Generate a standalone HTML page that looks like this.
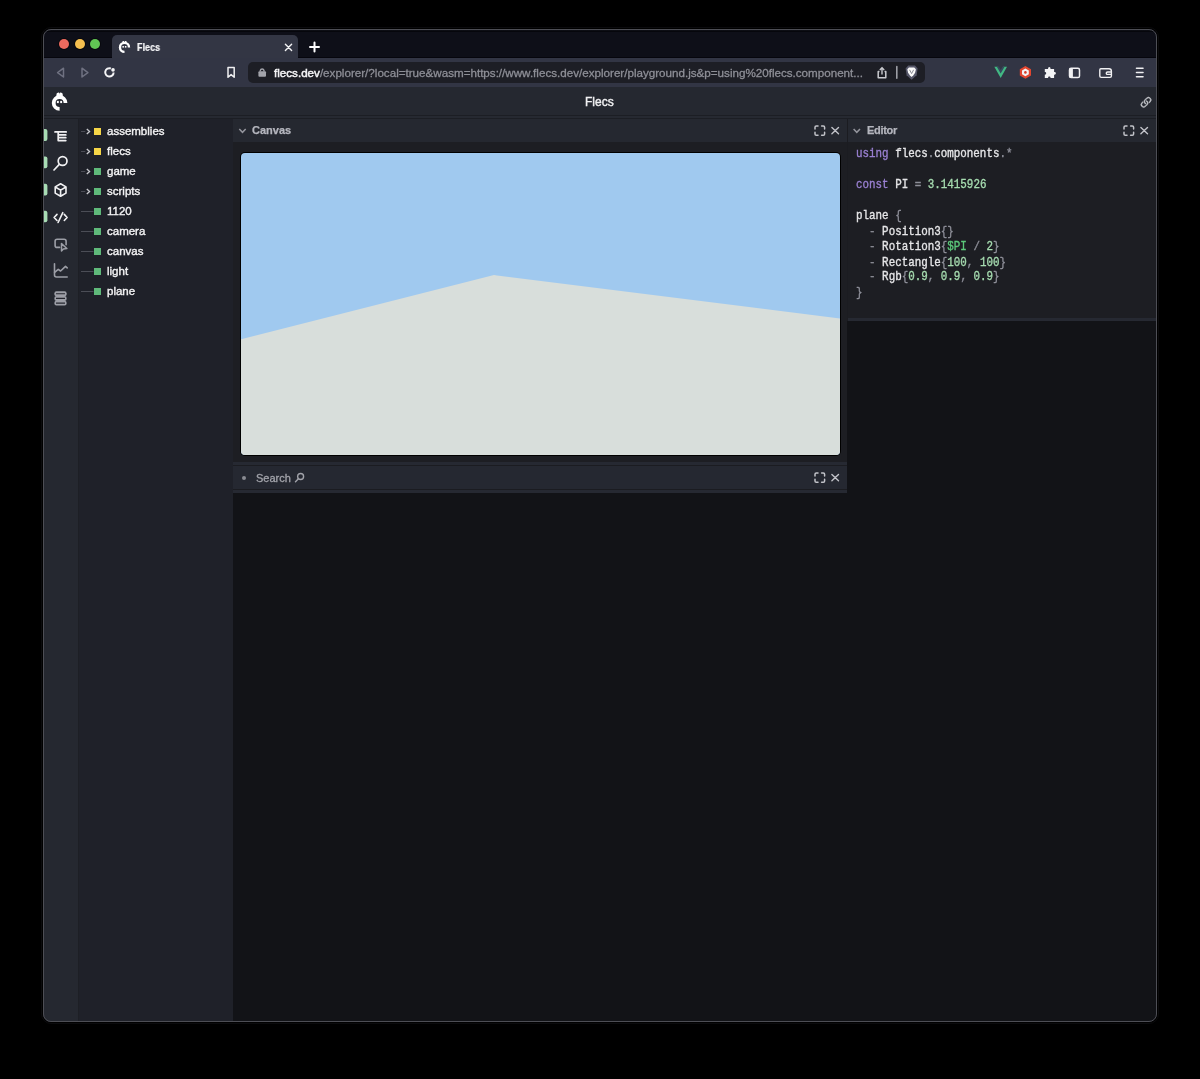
<!DOCTYPE html>
<html><head><meta charset="utf-8">
<style>
*{box-sizing:border-box;margin:0;padding:0}
html,body{width:1200px;height:1079px;background:#000;overflow:hidden}
body{position:relative;font-family:"Liberation Sans",sans-serif}
.a{position:absolute;will-change:transform}
#win{position:absolute;left:0;top:0;width:1200px;height:1079px;clip-path:inset(29px 43px 57px 43px round 8px);background:#121317}
#frame{position:absolute;left:43px;top:29px;width:1114px;height:993px;border:1px solid #4d4e55;border-radius:8px}
#shadow{position:absolute;left:41px;top:27px;width:1118px;height:997px;border:1px solid #0b0b0d;border-radius:10px}
svg{position:absolute;overflow:visible}
.code{font-family:"Liberation Mono",monospace;font-size:10.87px;line-height:13.51px;white-space:pre;color:#e4e4e6;transform:scaleY(1.14);transform-origin:0 0;-webkit-text-stroke:0.3px currentColor}
.k{color:#9a80d2}.w{color:#e6e6e8}.p{color:#8e8f99}.n{color:#a6dcb0}.v{color:#5cc97a}
.tt{color:#f3f3f5;font-size:11.5px;line-height:14px;white-space:nowrap;-webkit-text-stroke:0.4px #f3f3f5;text-shadow:0 0 1px #000}
</style></head><body>
<div id="shadow"></div>
<div id="win">
  <!-- title bar -->
  <div class="a" style="left:43px;top:29px;width:1114px;height:28px;background:#0e0f18"></div>
  <div class="a" style="left:43px;top:57px;width:1114px;height:1px;background:#06060d"></div>
  <div class="a" style="left:43px;top:30px;width:1114px;height:2px;background:linear-gradient(#101117,#030308)"></div>
  <!-- traffic lights -->
  <div class="a" style="left:59.2px;top:39.2px;width:10px;height:10px;border-radius:50%;background:#ed6a5e;box-shadow:0 0 0 1px rgba(0,0,0,0.45)"></div>
  <div class="a" style="left:74.8px;top:39.2px;width:10px;height:10px;border-radius:50%;background:#f5bf4f;box-shadow:0 0 0 1px rgba(0,0,0,0.45)"></div>
  <div class="a" style="left:90px;top:39.2px;width:10px;height:10px;border-radius:50%;background:#61c554;box-shadow:0 0 0 1px rgba(0,0,0,0.45)"></div>
  <!-- tab -->
  <div class="a" style="left:112px;top:35px;width:186px;height:24px;background:#333644;border-radius:5px 5px 0 0"></div>
  <div class="a" style="left:137px;top:41px;font-size:10.5px;font-weight:bold;color:#f6f6f8;-webkit-text-stroke:0.2px #f6f6f8;transform:scaleX(0.86);transform-origin:0 0">Flecs</div>
  <!-- toolbar -->
  <div class="a" style="left:43px;top:58px;width:1114px;height:29px;background:#323544"></div>
  <div class="a" style="left:248px;top:62px;width:677px;height:21px;background:#1d1e25;border-radius:5px"></div>
  <div class="a" style="left:274px;top:65.8px;font-size:11.63px;color:#8e8f97;white-space:nowrap;-webkit-text-stroke:0.3px #8e8f97"><span style="color:#f6f6f8;-webkit-text-stroke:0.45px #f6f6f8">flecs.dev</span>/explorer/?local=true&amp;wasm=https://www.flecs.dev/explorer/playground.js&amp;p=using%20flecs.component...</div>
  <!-- app header -->
  <div class="a" style="left:43px;top:87px;width:1114px;height:28px;background:#252830"></div>
  <div class="a" style="left:585px;top:94.5px;font-size:12px;color:#f0f0f2;-webkit-text-stroke:0.4px #f0f0f2">Flecs</div>
  <!-- separator -->
  <div class="a" style="left:43px;top:115px;width:1114px;height:4px;background:#262931;border-top:1px solid #1c1e24;border-bottom:1px solid #1c1e24"></div>
  <!-- sidebar -->
  <div class="a" style="left:43px;top:119px;width:35px;height:903px;background:#252830"></div>
  <div class="a" style="left:78px;top:119px;width:1px;height:903px;background:#1d1f25"></div>
  <div class="a" style="left:79px;top:119px;width:154px;height:903px;background:#1f2129"></div>
  <!-- canvas panel -->
  <div class="a" style="left:233px;top:119px;width:614px;height:23px;background:#252830"></div>
  <div class="a" style="left:233px;top:142px;width:614px;height:320px;background:#1d1e23"></div>
  <div class="a" style="left:233px;top:462px;width:614px;height:3px;background:#262932"></div>
  <div class="a" style="left:233px;top:465px;width:614px;height:1px;background:#1b1c21"></div>
  <div class="a" style="left:847px;top:119px;width:1px;height:202px;background:#1b1c21"></div>
  <div class="a" style="left:240px;top:152px;width:601px;height:304px;background:#000;border-radius:5px"></div>
  <svg style="left:241px;top:153px" width="599" height="302" viewBox="0 0 599 302">
    <defs><clipPath id="cc"><rect x="0" y="0" width="599" height="302" rx="4"/></clipPath></defs>
    <g clip-path="url(#cc)">
    <rect x="0" y="0" width="599" height="302" fill="#a0c9ef"/>
    <polygon points="0,186.3 253,122 599,165.5 599,302 0,302" fill="#d8dedb"/>
    </g>
  </svg>
  <div class="a" style="left:252px;top:124px;font-size:11px;line-height:13px;font-weight:bold;color:#b5b6be;-webkit-text-stroke:0.25px #b5b6be">Canvas</div>
  <!-- search panel -->
  <div class="a" style="left:233px;top:466px;width:614px;height:23px;background:#252831"></div>
  <div class="a" style="left:233px;top:489px;width:614px;height:1px;background:#1b1c21"></div>
  <div class="a" style="left:233px;top:490px;width:614px;height:3px;background:#262932"></div>
  <div class="a" style="left:241.5px;top:476px;width:4px;height:4px;border-radius:50%;background:#8a8b92"></div>
  <div class="a" style="left:255.5px;top:471.5px;font-size:11px;line-height:13px;color:#a2a3aa;-webkit-text-stroke:0.3px #a2a3aa">Search</div>
  <!-- editor panel -->
  <div class="a" style="left:848px;top:119px;width:309px;height:23px;background:#252830"></div>
  <div class="a" style="left:848px;top:142px;width:309px;height:176px;background:#1d1e23"></div>
  <div class="a" style="left:848px;top:318px;width:309px;height:3px;background:#262932"></div>
  <div class="a" style="left:866.5px;top:124px;font-size:11px;line-height:13px;font-weight:bold;color:#b5b6be;letter-spacing:-0.3px;-webkit-text-stroke:0.25px #b5b6be">Editor</div>

  <!-- TREE -->
  <div class="a tt" style="left:106.5px;top:124px">assemblies</div>
  <div class="a tt" style="left:106.5px;top:144px">flecs</div>
  <div class="a tt" style="left:106.5px;top:164px">game</div>
  <div class="a tt" style="left:106.5px;top:184px">scripts</div>
  <div class="a tt" style="left:106.5px;top:204px">1120</div>
  <div class="a tt" style="left:106.5px;top:224px">camera</div>
  <div class="a tt" style="left:106.5px;top:244px">canvas</div>
  <div class="a tt" style="left:106.5px;top:264px">light</div>
  <div class="a tt" style="left:106.5px;top:284px">plane</div>
  <svg style="left:0;top:0" width="1200" height="1079">
    <path d="M81 131.5 H85.3" stroke="#4b4d56" stroke-width="1"/>
    <path d="M86.8 128.9 L89.6 131.5 L86.8 134.1" fill="none" stroke="#c9cacf" stroke-width="1.3"/>
    <rect x="94" y="128.0" width="7" height="7" fill="#f5d547"/>
    <path d="M81 151.5 H85.3" stroke="#4b4d56" stroke-width="1"/>
    <path d="M86.8 148.9 L89.6 151.5 L86.8 154.1" fill="none" stroke="#c9cacf" stroke-width="1.3"/>
    <rect x="94" y="148.0" width="7" height="7" fill="#f5d547"/>
    <path d="M81 171.5 H85.3" stroke="#4b4d56" stroke-width="1"/>
    <path d="M86.8 168.9 L89.6 171.5 L86.8 174.1" fill="none" stroke="#c9cacf" stroke-width="1.3"/>
    <rect x="94" y="168.0" width="7" height="7" fill="#5fb97a"/>
    <path d="M81 191.5 H85.3" stroke="#4b4d56" stroke-width="1"/>
    <path d="M86.8 188.9 L89.6 191.5 L86.8 194.1" fill="none" stroke="#c9cacf" stroke-width="1.3"/>
    <rect x="94" y="188.0" width="7" height="7" fill="#5fb97a"/>
    <path d="M81 211.5 H93.5" stroke="#4b4d56" stroke-width="1"/>
    <rect x="94" y="208.0" width="7" height="7" fill="#5fb97a"/>
    <path d="M81 231.5 H93.5" stroke="#4b4d56" stroke-width="1"/>
    <rect x="94" y="228.0" width="7" height="7" fill="#5fb97a"/>
    <path d="M81 251.5 H93.5" stroke="#4b4d56" stroke-width="1"/>
    <rect x="94" y="248.0" width="7" height="7" fill="#5fb97a"/>
    <path d="M81 271.5 H93.5" stroke="#4b4d56" stroke-width="1"/>
    <rect x="94" y="268.0" width="7" height="7" fill="#5fb97a"/>
    <path d="M81 291.5 H93.5" stroke="#4b4d56" stroke-width="1"/>
    <rect x="94" y="288.0" width="7" height="7" fill="#5fb97a"/>
  </svg>
  <!-- CODE -->
  <div class="a code" style="left:855.5px;top:147px"><span class="k">using</span> <span class="w">flecs</span><span class="p">.</span><span class="w">components</span><span class="p">.*</span>

<span class="k">const</span> <span class="w">PI</span> <span class="p">=</span> <span class="n">3.1415926</span>

<span class="w">plane</span> <span class="p">{</span>
  <span class="p">-</span> <span class="w">Position3</span><span class="p">{}</span>
  <span class="p">-</span> <span class="w">Rotation3</span><span class="p">{</span><span class="v">$PI</span> <span class="p">/</span> <span class="n">2</span><span class="p">}</span>
  <span class="p">-</span> <span class="w">Rectangle</span><span class="p">{</span><span class="n">100</span><span class="p">,</span> <span class="n">100</span><span class="p">}</span>
  <span class="p">-</span> <span class="w">Rgb</span><span class="p">{</span><span class="n">0.9</span><span class="p">,</span> <span class="n">0.9</span><span class="p">,</span> <span class="n">0.9</span><span class="p">}</span>
<span class="p">}</span></div>
  <!-- ICONS -->
  <svg style="left:0;top:0" width="1200" height="1079" viewBox="0 0 1200 1079">
    <defs>
      <g id="logo">
        <path d="M5.9 0 A5.9 5.9 0 1 0 0 5.9" fill="none" stroke="#fff" stroke-width="3.8"/>
        <path d="M-3.1 -6.2 V-8.8 Q-3.1 -9.6 -2.3 -9.9 L-1.2 -10.3 Q-0.5 -10.5 -0.2 -9.8 L0 -8.4 L0.2 -9.8 Q0.5 -10.5 1.2 -10.3 L2.3 -9.9 Q3.1 -9.6 3.1 -8.8 V-6.2 Z" fill="#fff"/>
        <rect x="-2.7" y="-2.0" width="1.9" height="2.2" fill="#fff"/>
        <rect x="0.6" y="-2.0" width="1.9" height="2.2" fill="#fff"/>
      </g>
    </defs>
    <use href="#logo" transform="translate(59.6 102.9)"/>
    <g fill="#fff">
      <path d="M129 47.4 A4.5 4.5 0 1 0 124.5 51.9" fill="none" stroke="#fff" stroke-width="2.4"/>
      <path d="M122.3 43.6 V42 Q122.3 41.1 123.2 41.1 H123.8 L124.5 42.3 L125.2 41.1 H125.8 Q126.7 41.1 126.7 42 V43.6 Z"/>
      <rect x="122.4" y="46" width="1.5" height="1.6"/>
      <rect x="124.9" y="46" width="1.5" height="1.6"/>
    </g>
    <!-- tab close + new tab -->
    <path d="M285.4 44.3 L291.6 50.5 M291.6 44.3 L285.4 50.5" stroke="#f2f2f4" stroke-width="1.4" stroke-linecap="round"/>
    <path d="M314.5 42.5 V51.5 M310 47 H319" stroke="#fff" stroke-width="2" stroke-linecap="round"/>
    <!-- nav -->
    <path d="M63.5 68.2 L57.6 72.6 L63.5 77 Z" fill="none" stroke="#6f7181" stroke-width="1.5" stroke-linejoin="round"/>
    <path d="M82 68.2 L87.9 72.6 L82 77 Z" fill="none" stroke="#6f7181" stroke-width="1.5" stroke-linejoin="round"/>
    <path d="M113.6 72.4 A4.2 4.2 0 1 1 110.84 68.45" fill="none" stroke="#f4f4f6" stroke-width="2"/>
    <circle cx="113" cy="69.9" r="1.8" fill="#f4f4f6"/>
    <!-- bookmark -->
    <path d="M228 67.6 H234.2 V77.2 L231.1 74.6 L228 77.2 Z" fill="none" stroke="#f0f0f2" stroke-width="1.5" stroke-linejoin="round"/>
    <!-- lock -->
    <path d="M260.3 71.5 V70.5 A1.9 1.9 0 0 1 264 70.5 V71.5" fill="none" stroke="#a3a4ab" stroke-width="1.4"/>
    <rect x="258.4" y="71.3" width="7.6" height="5.4" rx="1" fill="#a3a4ab"/>
    <!-- share, divider, brave -->
    <path d="M879.5 71.5 H878.2 V77.8 H885.8 V71.5 H884.5" fill="none" stroke="#c9cacf" stroke-width="1.5" stroke-linejoin="round"/>
    <path d="M882 74.5 V67.8 M879.8 70 L882 67.6 L884.2 70" fill="none" stroke="#c9cacf" stroke-width="1.4" stroke-linejoin="round"/>
    <rect x="896" y="65.8" width="1.6" height="13.2" rx="0.8" fill="#9e9fa6"/>
    <path d="M908.2 65.6 H915 L917.6 68.6 L916.6 75.2 L911.6 79.7 L906.6 75.2 L905.6 68.6 Z" fill="#565769"/>
    <path d="M907.3 69.3 L909 67.6 H914.2 L915.9 69.3 L915.1 72.8 L913.4 75.3 L911.6 77 L909.8 75.3 L908.1 72.8 Z" fill="#fafafa"/>
    <path d="M909.6 69.8 L911.6 73.6 L913.6 69.8" fill="none" stroke="#8a8b94" stroke-width="1"/>
    <!-- vue -->
    <path d="M994.3 66.8 H998.2 L1000.7 71 L1003.1 66.8 H1007 L1000.7 77.9 Z" fill="#42b883"/>
    <path d="M996.8 66.8 H998.9 L1000.7 69.9 L1002.5 66.8 H1004.6 L1000.7 73.6 Z" fill="#35495e"/>
    <!-- red hex -->
    <path d="M1025.4 66 L1031 69.2 V75.6 L1025.4 78.8 L1019.8 75.6 V69.2 Z" fill="#e2462f"/>
    <path d="M1025.4 68.6 L1028.8 70.6 V74.2 L1025.4 76.2 L1022 74.2 V70.6 Z" fill="#f4f4f4"/>
    <circle cx="1025.4" cy="72.4" r="1.3" fill="#d93a27"/>
    <!-- puzzle -->
    <path d="M1044.8 69 H1048.1 C1047.7 66.3 1050.9 66.3 1050.5 69 H1054.1 V72.1 C1056.5 71.7 1056.5 75.1 1054.1 74.7 V77.9 H1050.5 C1050.7 76.1 1047.9 76.1 1048.1 77.9 H1044.8 V74.7 C1046.7 74.9 1046.7 71.9 1044.8 72.1 Z" fill="#f4f4f6"/>
    <!-- sidebar toggle -->
    <rect x="1069.5" y="68.3" width="10" height="9.2" rx="1.6" fill="none" stroke="#f0f0f2" stroke-width="1.5"/>
    <rect x="1069.5" y="68.3" width="3.4" height="9.2" fill="#f0f0f2"/>
    <!-- wallet -->
    <path d="M1100.8 68.8 H1109 Q1111.4 68.8 1111.4 71.2 V76 Q1111.4 77.4 1110 77.4 H1101.2 Q1099.8 77.4 1099.8 76 V70 Q1099.8 68.8 1100.8 68.8 Z" fill="none" stroke="#f0f0f2" stroke-width="1.4"/>
    <path d="M1111.4 72 H1107.6 Q1106.2 72 1106.2 73.2 Q1106.2 74.4 1107.6 74.4 H1111.4" fill="none" stroke="#f0f0f2" stroke-width="1.3"/>
    <!-- hamburger -->
    <path d="M1136.5 68.2 H1143 M1136.5 72.5 H1143 M1136.5 76.8 H1143" stroke="#f0f0f2" stroke-width="1.6" stroke-linecap="round"/>
    <!-- link -->
    <g fill="#c3c4ca" stroke="#c3c4ca" stroke-width="0.5" transform="translate(1138.6 95.3) scale(0.93)">
      <path d="M4.715 6.542 3.343 7.914a3 3 0 1 0 4.243 4.243l1.828-1.829A3 3 0 0 0 8.586 5.5L8 6.086a1 1 0 0 0-.154.199 2 2 0 0 1 .861 3.337L6.88 11.45a2 2 0 1 1-2.83-2.83l.793-.792a4 4 0 0 1-.128-1.287z"/>
      <path d="M6.586 4.672A3 3 0 0 0 7.414 9.5l.775-.776a2 2 0 0 1-.896-3.346L9.12 3.55a2 2 0 1 1 2.83 2.83l-.793.792c.112.42.155.855.128 1.287l1.372-1.372a3 3 0 1 0-4.243-4.243z"/>
    </g>
    <!-- panel header icons -->
    <g id="fsx" fill="none" stroke="#c2c3c9" stroke-width="1.5" stroke-linecap="round">
      <path d="M815 129 V127.3 Q815 126 816.3 126 H818"/>
      <path d="M821.6 126 H823.3 Q824.6 126 824.6 127.3 V129"/>
      <path d="M824.6 132.2 V133.9 Q824.6 135.2 823.3 135.2 H821.6"/>
      <path d="M818 135.2 H816.3 Q815 135.2 815 133.9 V132.2"/>
      <path d="M831.9 127.5 L838.5 133.8 M838.5 127.5 L831.9 133.8" stroke-width="1.4"/>
    </g>
    <use href="#fsx" transform="translate(309 0)"/>
    <use href="#fsx" transform="translate(0 347)"/>
    <!-- chevrons -->
    <path d="M239.3 129 L242.5 132.3 L245.7 129" fill="none" stroke="#94959d" stroke-width="1.5"/>
    <path d="M853.6 129 L856.8 132.3 L860 129" fill="none" stroke="#94959d" stroke-width="1.5"/>
    <!-- search mag in search panel -->
    <circle cx="300.6" cy="476.5" r="3" fill="none" stroke="#a2a3aa" stroke-width="1.4"/>
    <path d="M298.4 478.7 L295.5 481.8" stroke="#a2a3aa" stroke-width="1.4" stroke-linecap="round"/>
    <!-- sidebar pills -->
    <g fill="#a8dcb4">
      <rect x="42" y="129" width="5.4" height="12" rx="2"/>
      <rect x="42" y="156.5" width="5.4" height="11.8" rx="2"/>
      <rect x="42" y="183.8" width="5.4" height="11.8" rx="2"/>
      <rect x="42" y="210.8" width="5.4" height="11.5" rx="2"/>
    </g>
    <!-- sidebar icons -->
    <g fill="none" stroke="#f0f0f2" stroke-width="1.7" stroke-linecap="round" stroke-linejoin="round">
      <path d="M55 131.9 H66.2 M58.2 132 V140.6 H65.8 M58.2 134.9 H65.8 M58.2 137.7 H65.8"/>
      <circle cx="62.6" cy="161" r="4.4"/>
      <path d="M59.3 164.4 L54 170" />
      <path d="M60.6 183.8 L66 186.9 V193.1 L60.6 196.2 L55.2 193.1 V186.9 Z M55.6 187.2 L60.6 190.1 L65.6 187.2 M60.6 190.1 V195.8" stroke-width="1.6"/>
      <path d="M57 214.4 L54.1 217.5 L57 220.5 M64.3 214.4 L67.1 217.5 L64.3 220.5 M62.8 212.6 L58.1 222.5" stroke-width="1.6"/>
    </g>
    <g fill="none" stroke="#9c9ea6" stroke-width="1.6" stroke-linecap="round" stroke-linejoin="round">
      <path d="M59.6 247.4 H57.1 Q55.1 247.4 55.1 245.4 V241.2 Q55.1 239.2 57.1 239.2 H64.1 Q66.1 239.2 66.1 241.2 V244.8"/>
      <path d="M61.5 243.6 L61.5 250.9 L63.4 248.9 L66.9 248.5 Z" stroke-width="1.5"/>
      <path d="M54.5 263.8 V275 Q54.5 277 56.5 277 H67.2"/>
      <path d="M54.6 272.3 L58.2 269.3 L60.6 271 L65.5 266.3 L67.2 267.9"/>
    </g>
    <g>
      <rect x="54.4" y="291.3" width="12.2" height="4.9" rx="2" fill="#9c9ea6"/>
      <rect x="54.4" y="296" width="12.2" height="4.9" rx="2" fill="#9c9ea6"/>
      <rect x="54.4" y="300.7" width="12.2" height="4.9" rx="2" fill="#9c9ea6"/>
      <path d="M56 293.7 H65 M56 298.4 H65 M56 303.1 H65" stroke="#25272f" stroke-width="1.1"/>
    </g>
  </svg>
</div>
<div id="frame"></div>
</body></html>
